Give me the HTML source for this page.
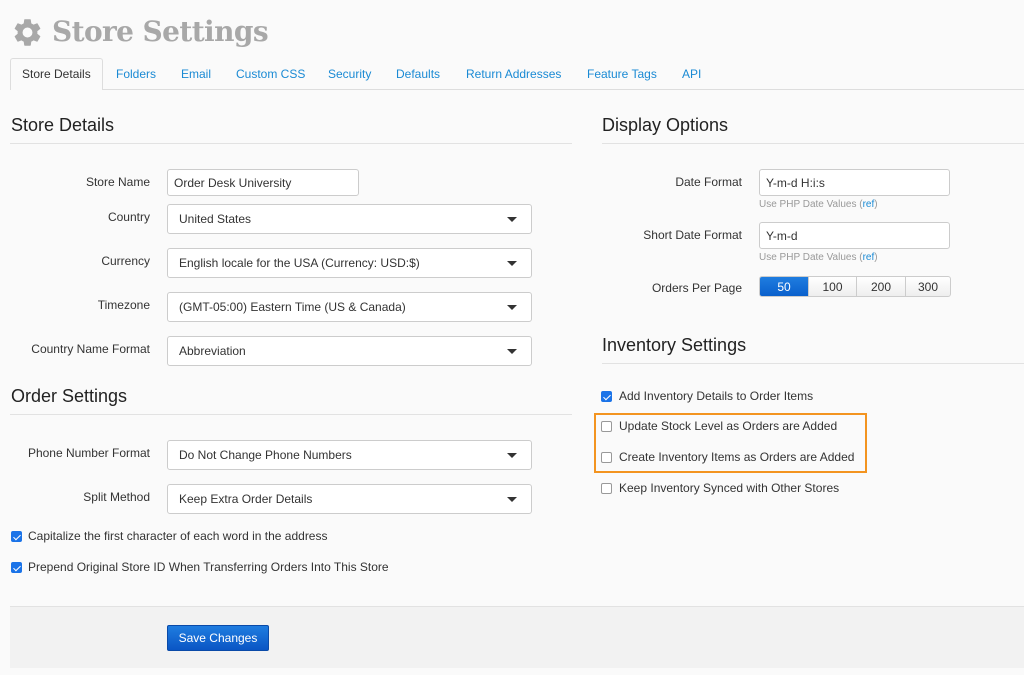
<!DOCTYPE html>
<html><head><meta charset="utf-8"><style>
*{box-sizing:border-box;margin:0;padding:0}
body{width:1024px;height:675px;background:#fafafa;font-family:"Liberation Sans",sans-serif;color:#333;position:relative;overflow:hidden;font-size:12px}
.a{position:absolute;white-space:nowrap}
.title{left:52px;top:15px;font-family:"DejaVu Serif","Liberation Serif",serif;font-weight:bold;font-size:28px;color:#a8a8a8;letter-spacing:-0.6px}
.tab{top:67px;color:#1a8ad4;font-size:12px}
.h{font-size:18px;color:#222}
.hr{height:1px;background:#e2e2e2}
.lbl{font-size:12px;color:#333;text-align:right}
.inp{background:#fff;border:1px solid #ccc;border-radius:3px;padding:0 6px;font-size:12px;display:flex;align-items:center}
.sel{background:#fff;border:1px solid #ccc;border-radius:3px;padding:0 11px;font-size:12px;display:flex;align-items:center}
.sel:after{content:"";position:absolute;right:14px;top:12px;border-left:5px solid transparent;border-right:5px solid transparent;border-top:5px solid #333}
.help{font-size:10px;color:#999}
.help b{color:#1a8ad4;font-weight:normal}
.cb{width:11px;height:11px;border-radius:2px;border:1px solid #999;background:#fff}
.cb.on{background:#1a73e8;border-color:#1a73e8}
.cb.on:after{content:"";position:absolute;left:3px;top:0.5px;width:3px;height:6px;border:solid #fff;border-width:0 1.6px 1.6px 0;transform:rotate(45deg)}
.ct{font-size:12px;color:#333}
</style></head><body>
<svg class="a" style="left:11px;top:16px" width="33" height="33" viewBox="0 0 24 24"><path fill="#a8a8a8" d="M19.14 12.94c.04-.3.06-.61.06-.94s-.02-.64-.07-.94l2.030-1.58a.49.49 0 0 0 .12-.61l-1.92-3.32a.49.49 0 0 0-.59-.22l-2.39.96c-.5-.38-1.03-.7-1.62-.94l-.36-2.54a.48.48 0 0 0-.48-.41h-3.84c-.24 0-.43.17-.47.41l-.36 2.54c-.59.24-1.130.57-1.62.94l-2.39-.96a.48.48 0 0 0-.59.22L2.74 8.87c-.12.21-.08.47.12.61l2.03 1.58c-.05.3-.09.63-.09.94s.02.64.07.94l-2.03 1.58a.49.49 0 0 0-.12.61l1.92 3.32c.12.22.37.29.59.22l2.39-.96c.5.38 1.03.7 1.62.94l.36 2.54c.05.24.24.41.48.41h3.84c.24 0 .44-.17.47-.41l.36-2.54c.59-.24 1.13-.56 1.62-.94l2.39.96c.22.08.47 0 .59-.22l1.92-3.32c.12-.22.07-.47-.12-.61l-2.01-1.58zM12 15.6A3.6 3.6 0 1 1 12 8.4a3.6 3.6 0 0 1 0 7.2z"/></svg>
<div class="a title">Store Settings</div>
<div class="a hr" style="left:10px;top:89px;width:1014px;background:#ddd"></div>
<div class="a" style="left:10px;top:58px;width:93px;height:32px;background:#fafafa;border:1px solid #ddd;border-bottom:none;border-radius:3px 3px 0 0"></div>
<div class="a tab" style="left:22px;color:#333">Store Details</div>
<div class="a tab" style="left:116px">Folders</div>
<div class="a tab" style="left:181px">Email</div>
<div class="a tab" style="left:236px">Custom CSS</div>
<div class="a tab" style="left:328px">Security</div>
<div class="a tab" style="left:396px">Defaults</div>
<div class="a tab" style="left:466px">Return Addresses</div>
<div class="a tab" style="left:587px">Feature Tags</div>
<div class="a tab" style="left:682px">API</div>

<div class="a h" style="left:11px;top:115px">Store Details</div>
<div class="a hr" style="left:10px;top:143px;width:562px"></div>
<div class="a lbl" style="left:0;width:150px;top:175px">Store Name</div>
<div class="a inp" style="left:167px;top:169px;width:192px;height:27px">Order Desk University</div>
<div class="a lbl" style="left:0;width:150px;top:210px">Country</div>
<div class="a sel" style="left:167px;top:204px;width:365px;height:30px">United States</div>
<div class="a lbl" style="left:0;width:150px;top:254px">Currency</div>
<div class="a sel" style="left:167px;top:248px;width:365px;height:30px">English locale for the USA (Currency: USD:$)</div>
<div class="a lbl" style="left:0;width:150px;top:298px">Timezone</div>
<div class="a sel" style="left:167px;top:292px;width:365px;height:30px">(GMT-05:00) Eastern Time (US &amp; Canada)</div>
<div class="a lbl" style="left:0;width:150px;top:342px">Country Name Format</div>
<div class="a sel" style="left:167px;top:336px;width:365px;height:30px">Abbreviation</div>

<div class="a h" style="left:11px;top:386px">Order Settings</div>
<div class="a hr" style="left:10px;top:414px;width:562px"></div>
<div class="a lbl" style="left:0;width:150px;top:446px">Phone Number Format</div>
<div class="a sel" style="left:167px;top:440px;width:365px;height:30px">Do Not Change Phone Numbers</div>
<div class="a lbl" style="left:0;width:150px;top:490px">Split Method</div>
<div class="a sel" style="left:167px;top:484px;width:365px;height:30px">Keep Extra Order Details</div>
<div class="a cb on" style="left:11px;top:531px"></div>
<div class="a ct" style="left:28px;top:529px">Capitalize the first character of each word in the address</div>
<div class="a cb on" style="left:11px;top:562px"></div>
<div class="a ct" style="left:28px;top:560px">Prepend Original Store ID When Transferring Orders Into This Store</div>

<div class="a" style="left:10px;top:606px;width:1014px;height:62px;background:#f2f2f2;border-top:1px solid #e2e2e2"></div>
<div class="a" style="left:167px;top:625px;width:102px;height:26px;background:linear-gradient(#1f7de0,#0a55c4);border:1px solid #0a4aa8;border-radius:2px;color:#fff;font-size:12px;display:flex;align-items:center;justify-content:center">Save Changes</div>

<div class="a h" style="left:602px;top:115px">Display Options</div>
<div class="a hr" style="left:602px;top:143px;width:422px"></div>
<div class="a lbl" style="left:590px;width:152px;top:175px">Date Format</div>
<div class="a inp" style="left:759px;top:169px;width:191px;height:27px">Y-m-d H:i:s</div>
<div class="a help" style="left:759px;top:199px">Use PHP Date Values (<b>ref</b>)</div>
<div class="a lbl" style="left:590px;width:152px;top:228px">Short Date Format</div>
<div class="a inp" style="left:759px;top:222px;width:191px;height:27px">Y-m-d</div>
<div class="a help" style="left:759px;top:252px">Use PHP Date Values (<b>ref</b>)</div>
<div class="a lbl" style="left:590px;width:152px;top:281px">Orders Per Page</div>
<div class="a" style="left:759px;top:276px;width:192px;height:21px;display:flex;border:1px solid #ccc;border-radius:3px;overflow:hidden;font-size:12px;background:linear-gradient(#fff,#eee)">
<div style="width:48px;background:linear-gradient(#1f7de0,#0a60cc);color:#fff;display:flex;align-items:center;justify-content:center">50</div>
<div style="width:48px;border-left:1px solid #ccc;display:flex;align-items:center;justify-content:center">100</div>
<div style="width:49px;border-left:1px solid #ccc;display:flex;align-items:center;justify-content:center">200</div>
<div style="flex:1;border-left:1px solid #ccc;display:flex;align-items:center;justify-content:center">300</div>
</div>

<div class="a h" style="left:602px;top:335px">Inventory Settings</div>
<div class="a hr" style="left:602px;top:363px;width:422px"></div>
<div class="a cb on" style="left:601px;top:391px"></div>
<div class="a ct" style="left:619px;top:389px">Add Inventory Details to Order Items</div>
<div class="a" style="left:594px;top:413px;width:273px;height:60px;border:2px solid #f39420"></div>
<div class="a cb" style="left:601px;top:421px"></div>
<div class="a ct" style="left:619px;top:419px">Update Stock Level as Orders are Added</div>
<div class="a cb" style="left:601px;top:452px"></div>
<div class="a ct" style="left:619px;top:450px">Create Inventory Items as Orders are Added</div>
<div class="a cb" style="left:601px;top:483px"></div>
<div class="a ct" style="left:619px;top:481px">Keep Inventory Synced with Other Stores</div>
</body></html>
